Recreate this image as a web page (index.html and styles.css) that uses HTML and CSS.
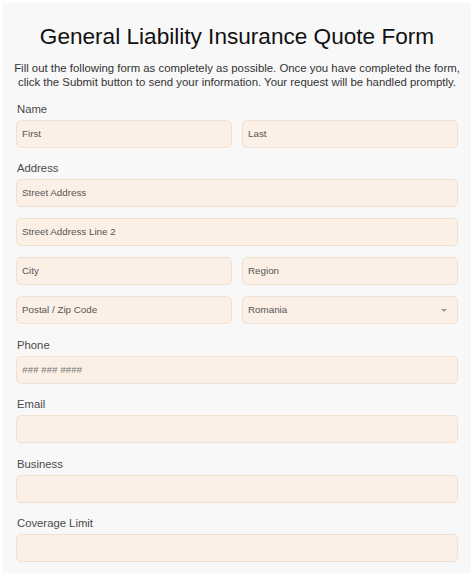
FILE: index.html
```html
<!DOCTYPE html>
<html>
<head>
<meta charset="utf-8">
<link rel="stylesheet" href="styles.css">
</head>
<body>
<div class="page">
  <h1 class="title">General Liability Insurance Quote Form</h1>
  <p class="intro">Fill out the following form as completely as possible. Once you have completed the form, click the Submit button to send your information. Your request will be handled promptly.</p>
  <form class="form">
    <div class="group">
      <div class="label">Name</div>
      <div class="row">
        <div class="input">First</div>
        <div class="input">Last</div>
      </div>
    </div>
    <div class="group">
      <div class="label">Address</div>
      <div class="stack">
        <div class="input">Street Address</div>
        <div class="input">Street Address Line 2</div>
        <div class="row">
          <div class="input">City</div>
          <div class="input">Region</div>
        </div>
        <div class="row">
          <div class="input">Postal / Zip Code</div>
          <div class="input select">Romania<span class="caret"></span></div>
        </div>
      </div>
    </div>
    <div class="group">
      <div class="label">Phone</div>
      <div class="input hint">### ### ####</div>
    </div>
    <div class="group">
      <div class="label">Email</div>
      <div class="input"></div>
    </div>
    <div class="group">
      <div class="label">Business</div>
      <div class="input"></div>
    </div>
    <div class="group">
      <div class="label">Coverage Limit</div>
      <div class="input"></div>
    </div>
  </form>
</div>
</body>
</html>
```
FILE: styles.css
```css
html, body {
  margin: 0;
  padding: 0;
  background: #ffffff;
}
body {
  font-family: "Liberation Sans", Arial, sans-serif;
  padding: 3px;
}
.page {
  background: #f8f8f8;
  min-height: 570px;
  padding: 19px 13px 0 13px;
  box-sizing: border-box;
}
.title {
  margin: 0;
  font-weight: normal;
  font-size: 22.6px;
  line-height: 30px;
  text-align: center;
  color: #111;
}
.intro {
  margin: 9px -6px 0 -6px;
  font-size: 11.4px;
  line-height: 14px;
  text-align: center;
  color: #333;
}
.form {
  margin-top: 0;
}
.group {
  margin-top: 12.5px;
}
.group:first-child {
  margin-top: 11.5px;
}
.label {
  font-size: 11.3px;
  line-height: 16px;
  color: #4a4a4a;
  margin-bottom: 3px;
  padding-left: 1px;
}
.stack {
  display: flex;
  flex-direction: column;
  gap: 11px;
}
.row {
  display: grid;
  grid-template-columns: 1fr 1fr;
  gap: 10px;
}
.input {
  height: 28px;
  box-sizing: border-box;
  background: #fcf0e6;
  border: 1px solid #f0e0d2;
  border-radius: 5px;
  padding: 0 5px;
  font-size: 9.8px;
  line-height: 26px;
  color: #555;
  position: relative;
}
.hint {
  color: #777;
  font-style: italic;
}
.caret {
  position: absolute;
  right: 10px;
  top: 12px;
  width: 0;
  height: 0;
  border-left: 3px solid transparent;
  border-right: 3px solid transparent;
  border-top: 3px solid #999;
}
```
